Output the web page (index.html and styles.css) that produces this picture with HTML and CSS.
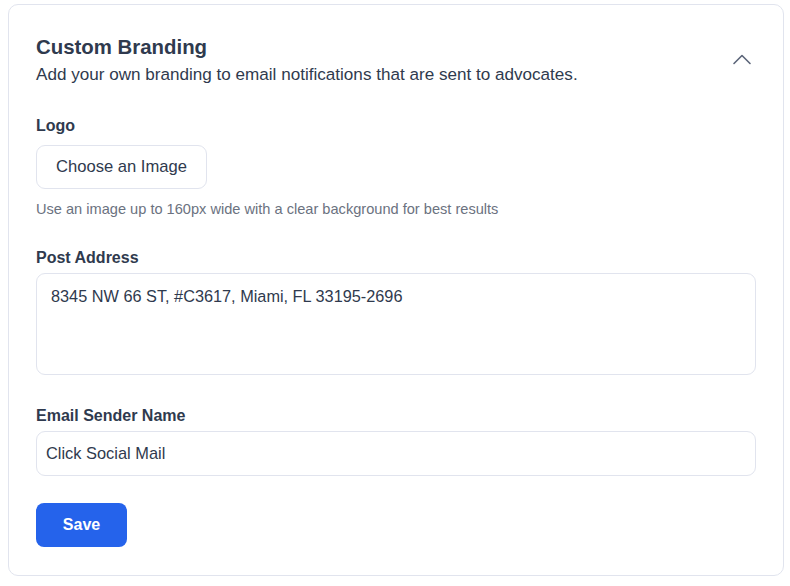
FILE: index.html
```html
<!DOCTYPE html>
<html lang="en">
<head>
<meta charset="utf-8">
<title>Custom Branding</title>
<link rel="stylesheet" href="styles.css">
</head>
<body>
<section class="card">
  <header class="card-header">
    <div class="header-text">
      <h2 class="title">Custom Branding</h2>
      <p class="subtitle">Add your own branding to email notifications that are sent to advocates.</p>
    </div>
    <button class="collapse" type="button" aria-label="Collapse">
      <svg width="24" height="24" viewBox="0 0 24 24" fill="none" stroke="#5b6478" stroke-width="1.6" stroke-linecap="round" stroke-linejoin="round"><path d="M4 15.5 L12 7.5 L20 15.5"/></svg>
    </button>
  </header>

  <div class="field field-logo">
    <label class="label label-logo">Logo</label>
    <button class="choose" type="button">Choose an Image</button>
    <p class="help">Use an image up to 160px wide with a clear background for best results</p>
  </div>

  <div class="field field-address">
    <label class="label label-address">Post Address</label>
    <textarea class="textarea">8345 NW 66 ST, #C3617, Miami, FL 33195-2696</textarea>
  </div>

  <div class="field field-sender">
    <label class="label label-sender">Email Sender Name</label>
    <input class="input" type="text" value="Click Social Mail">
  </div>

  <button class="save" type="button">Save</button>
</section>
</body>
</html>
```

FILE: styles.css
```css
* { box-sizing: border-box; }

html, body {
  margin: 0;
  padding: 0;
  background: #ffffff;
}

body {
  padding: 4px 6px 0 8px;
  font-family: "Liberation Sans", Arial, sans-serif;
  color: #2f3a4e;
}

.card {
  width: 776px;
  border: 1px solid #e1e4ee;
  border-radius: 10px;
  padding: 28px 27px 28px 27px;
  display: flex;
  flex-direction: column;
  align-items: flex-start;
}

.card-header {
  width: 100%;
  display: flex;
  justify-content: space-between;
  align-items: center;
  margin-bottom: 27px;
}

.title {
  margin: 0;
  font-size: 20.4px;
  line-height: 28px;
  font-weight: 700;
  color: #2f3a4e;
}

.subtitle {
  margin: 2px 0 0 0;
  font-size: 17.1px;
  line-height: 24px;
  color: #2f3a4e;
}

.collapse {
  border: 0;
  background: transparent;
  padding: 0;
  margin-right: 2px;
  width: 24px;
  height: 24px;
  display: flex;
  cursor: pointer;
}

.field {
  width: 100%;
  display: flex;
  flex-direction: column;
  align-items: flex-start;
}

.field-logo { margin-bottom: 27px; }
.field-address { margin-bottom: 29px; }
.field-sender { margin-bottom: 27px; }

.label {
  font-size: 16px;
  line-height: 24px;
  font-weight: 700;
  color: #2f3a4e;
  margin-bottom: 4px;
}

.label-logo { margin-bottom: 7px; }
.label-address { margin-bottom: 3px; }
.label-sender { margin-bottom: 3px; }

.choose {
  height: 44px;
  padding: 0 19px;
  border: 1px solid #e1e4ee;
  border-radius: 9px;
  background: #ffffff;
  font-family: "Liberation Sans", Arial, sans-serif;
  font-size: 16.6px;
  color: #2f3a4e;
  cursor: pointer;
}

.help {
  margin: 10px 0 0 0;
  font-size: 14.6px;
  line-height: 20px;
  color: #6b7280;
}

.textarea {
  width: 100%;
  height: 102px;
  border: 1px solid #e1e4ee;
  border-radius: 9px;
  padding: 10px 14px;
  font-family: "Liberation Sans", Arial, sans-serif;
  font-size: 16.3px;
  line-height: 24px;
  color: #2f3a4e;
  resize: none;
  outline: none;
}

.input {
  width: 100%;
  height: 45px;
  border: 1px solid #e1e4ee;
  border-radius: 9px;
  padding: 0 9px;
  font-family: "Liberation Sans", Arial, sans-serif;
  font-size: 16.4px;
  color: #2f3a4e;
  outline: none;
}

.save {
  height: 44px;
  width: 91px;
  border: 0;
  border-radius: 8px;
  background: #2563eb;
  color: #ffffff;
  font-family: "Liberation Sans", Arial, sans-serif;
  font-size: 16px;
  font-weight: 700;
  cursor: pointer;
}
```
